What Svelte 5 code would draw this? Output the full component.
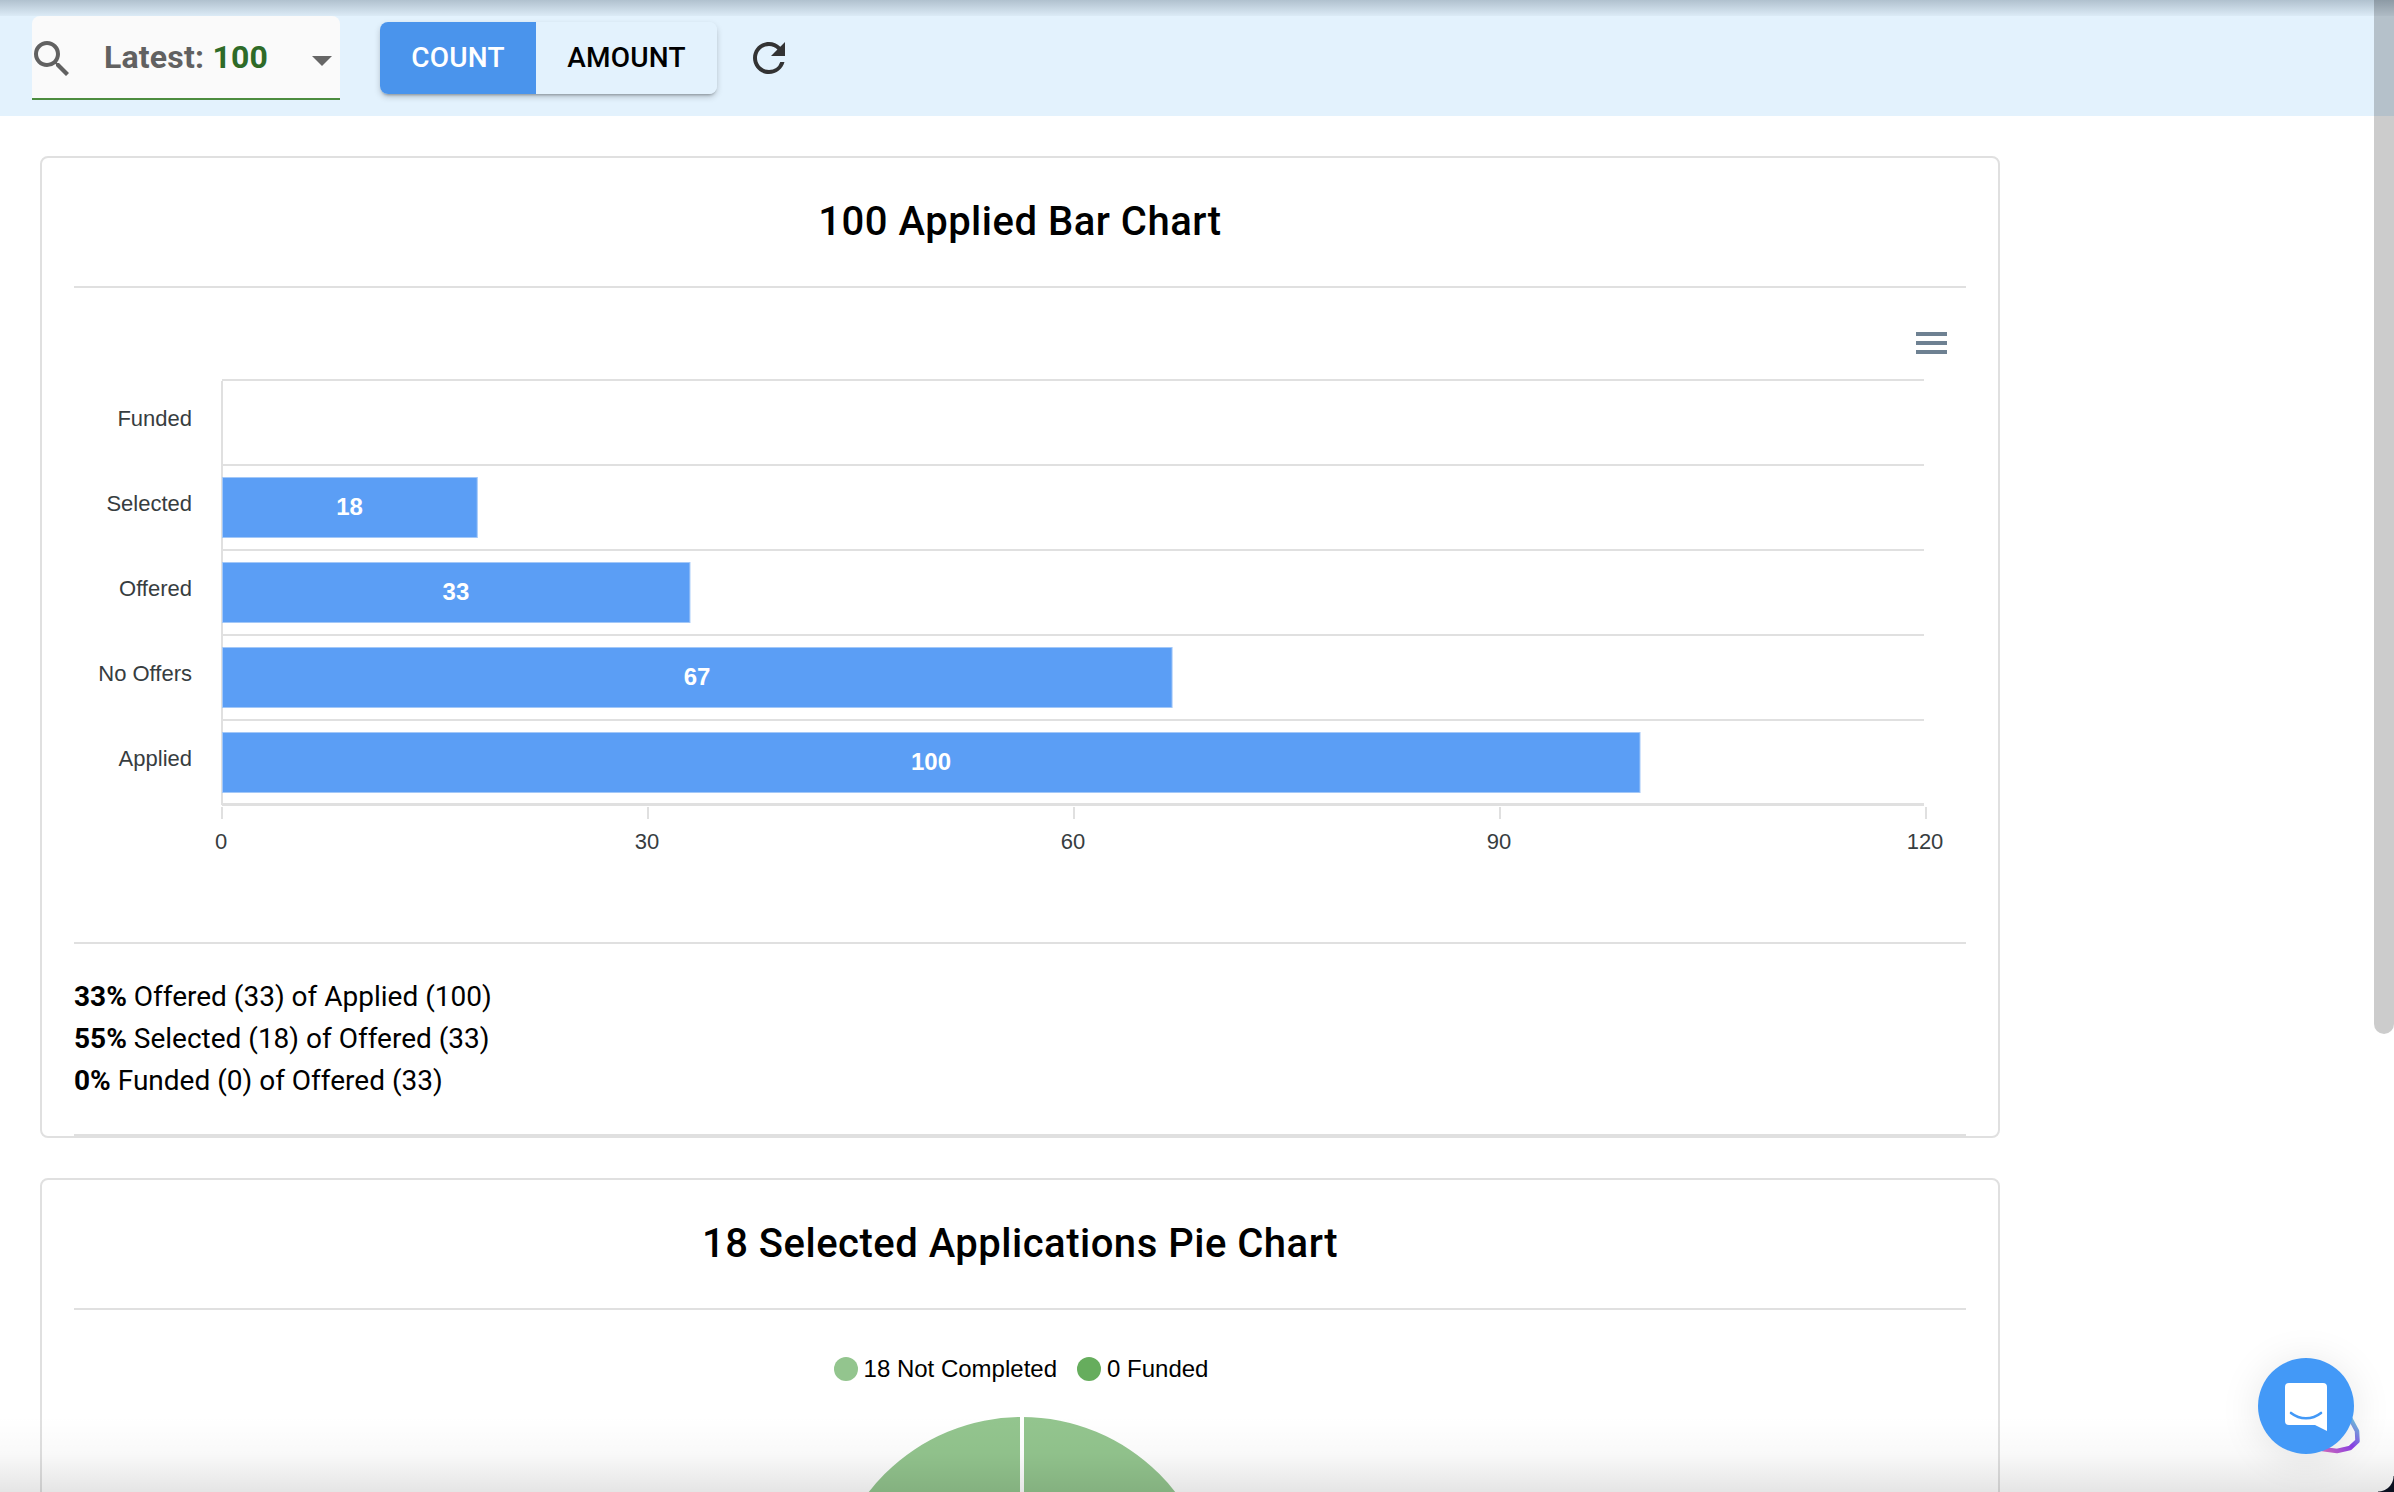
<script lang="ts">
  const rows = [
    { label: 'Funded', value: 0, labelY: 418 },
    { label: 'Selected', value: 18, labelY: 503 },
    { label: 'Offered', value: 33, labelY: 588 },
    { label: 'No Offers', value: 67, labelY: 673 },
    { label: 'Applied', value: 100, labelY: 758 }
  ];
  const gridLines = [380, 465, 550, 635, 720];
  const ticks = [0, 30, 60, 90, 120];
  const plotLeft = 222;
  const unit = 14.2;
  const barUnit = 14.18;

  let metric = $state('count');
</script>

<div class="page">
  <header class="toolbar">
    <div class="latest">
      <svg class="search" viewBox="0 0 24 24" aria-hidden="true">
        <path d="M9.5 3A6.5 6.5 0 0 1 16 9.5c0 1.61-.59 3.09-1.56 4.23l.27.27h.79l5 5-1.5 1.5-5-5v-.79l-.27-.27A6.516 6.516 0 0 1 9.5 16 6.5 6.5 0 0 1 3 9.5 6.5 6.5 0 0 1 9.5 3m0 2C7 5 5 7 5 9.5S7 14 9.5 14 14 12 14 9.5 12 5 9.5 5z" />
      </svg>
      <span class="latest-text">Latest: <b>100</b></span>
      <span class="caret"></span>
    </div>
    <div class="toggle">
      <button class:active={metric === 'count'} onclick={() => (metric = 'count')}>COUNT</button>
      <button class:active={metric === 'amount'} onclick={() => (metric = 'amount')}>AMOUNT</button>
    </div>
    <svg class="refresh" viewBox="0 0 24 24" aria-hidden="true">
      <path d="M17.65 6.35A7.958 7.958 0 0 0 12 4c-4.42 0-7.99 3.58-7.99 8s3.57 8 7.99 8c3.73 0 6.84-2.55 7.73-6h-2.08A5.99 5.99 0 0 1 12 18c-3.31 0-6-2.69-6-6s2.69-6 6-6c1.66 0 3.14.69 4.22 1.78L13 11h7V4l-2.35 2.35z" />
    </svg>
  </header>

  <main class="content">
    <section class="card first">
      <h2>100 Applied Bar Chart</h2>
      <hr />
      <svg class="bar-chart" viewBox="74 288 1892 654" width="1892" height="654">
        <g class="menu-icon">
          <rect x="1916" y="332" width="31" height="4" />
          <rect x="1916" y="341" width="31" height="4" />
          <rect x="1916" y="350" width="31" height="4" />
        </g>
        {#each gridLines as y}
          <rect class="grid" x="222" y={y - 1} width="1702" height="2" />
        {/each}
        <rect class="grid" x="221" y="381" width="2" height="424" />
        <rect class="grid" x="222" y="803" width="1702" height="3" />
        {#each ticks as t}
          <rect class="grid" x={plotLeft + t * unit - 1} y="807" width="2" height="12" />
          <text class="tick" x={plotLeft + t * unit - 1} y="849" text-anchor="middle">{t}</text>
        {/each}
        {#each rows as row, i}
          <text class="tick" x="192" y={row.labelY + 8} text-anchor="end">{row.label}</text>
          {#if row.value > 0}
            <rect class="bar" x="222.5" y={392.5 + i * 85} width={row.value * barUnit - 0.5} height="60" />
            <text class="value" x={plotLeft + (row.value * barUnit) / 2} y={515 + (i - 1) * 85} text-anchor="middle">{row.value}</text>
          {/if}
        {/each}
      </svg>
      <hr />
      <div class="summary">
        <p><b>33%</b> Offered (33) of Applied (100)</p>
        <p><b>55%</b> Selected (18) of Offered (33)</p>
        <p><b>0%</b> Funded (0) of Offered (33)</p>
      </div>
      <hr class="closing" />
    </section>

    <section class="card">
      <h2>18 Selected Applications Pie Chart</h2>
      <hr />
      <div class="legend">
        <span class="item"><i class="dot light"></i>18 Not Completed</span>
        <span class="item"><i class="dot dark"></i>0 Funded</span>
      </div>
      <div class="pie-wrap">
        <svg class="pie" viewBox="0 0 388 388" width="388" height="388">
          <circle cx="194" cy="194" r="194" fill="#93c58e" />
          <rect x="192" y="0" width="4" height="194" fill="#fff" />
        </svg>
      </div>
    </section>
  </main>

  <div class="bottom-fade"></div>
  <div class="top-shade"></div>
  <div class="scroll-thumb"></div>

  <svg class="ring" viewBox="0 0 60 60" width="60" height="60" aria-hidden="true">
    <defs>
      <linearGradient id="ringStroke" x1="1" y1="0" x2="0" y2="1">
        <stop offset="0" stop-color="#6fd6e0" />
        <stop offset="0.5" stop-color="#8a3fe6" />
        <stop offset="1" stop-color="#d66cc4" />
      </linearGradient>
    </defs>
    <path d="M28 46 L37 38" stroke="#10131c" stroke-width="4" fill="none" />
    <path d="M46 22 L53 35 L53.5 45 L46 52 L33 55 L18 53" stroke="url(#ringStroke)" stroke-width="4.5" fill="none" stroke-linejoin="round" />
  </svg>

  <button class="chat" aria-label="Open chat">
    <svg viewBox="0 0 42 48" width="42" height="48" aria-hidden="true">
      <path class="bubble" d="M4 0H38a4 4 0 0 1 4 4V48L30 42H4a4 4 0 0 1-4-4V4a4 4 0 0 1 4-4z" />
      <path class="smile" d="M6 30c9 7 21 7 30 0" />
    </svg>
  </button>

  <div class="window-corner"></div>
</div>

<style>
  :global(body) {
    margin: 0;
    background: #fff;
    overflow: hidden;
  }

  .page {
    position: relative;
    width: 2394px;
    height: 1492px;
    overflow: hidden;
    font-family: Roboto, 'Liberation Sans', sans-serif;
    color: #000;
  }

  .toolbar {
    height: 116px;
    box-sizing: border-box;
    background: #e3f2fd;
    display: flex;
    align-items: flex-start;
    padding: 16px 0 0 32px;
  }

  .latest {
    width: 308px;
    height: 84px;
    box-sizing: border-box;
    background: #fafafa;
    border-bottom: 2px solid #4c8c3f;
    border-radius: 8px 8px 0 0;
    display: flex;
    align-items: center;
  }

  .search {
    width: 48px;
    height: 48px;
    margin-left: -4px;
    margin-top: 4px;
    fill: #616161;
    flex: none;
  }

  .latest-text {
    margin-left: 28px;
    font-size: 32px;
    font-weight: 700;
    letter-spacing: 0.2px;
    color: #616161;
    white-space: nowrap;
    position: relative;
  }

  .latest-text b {
    font-weight: 700;
    color: #2e6b28;
  }

  .caret {
    margin-left: 44px;
    margin-top: 8px;
    border-left: 10px solid transparent;
    border-right: 10px solid transparent;
    border-top: 10px solid #666;
  }

  .toggle {
    margin: 6px 0 0 40px;
    width: 337px;
    height: 72px;
    display: flex;
    border-radius: 8px;
    overflow: hidden;
    box-shadow: 0 3px 3px -2px rgba(0, 0, 0, 0.3), 0 3px 6px rgba(0, 0, 0, 0.18);
  }

  .toggle button {
    border: none;
    padding: 0 0 2px;
    font-family: inherit;
    font-size: 28px;
    font-weight: 500;
    letter-spacing: 0.2px;
    background: #e3f2fd;
    color: #000;
    cursor: pointer;
  }

  .toggle button:first-child {
    width: 156px;
  }

  .toggle button:last-child {
    flex: 1;
  }

  .toggle button.active {
    background: #4a94ec;
    color: #fff;
  }

  .refresh {
    width: 48px;
    height: 48px;
    margin: 18px 0 0 28px;
    fill: #333;
  }

  .content {
    padding: 40px 0 0 40px;
    width: 1960px;
    display: flex;
    flex-direction: column;
    gap: 40px;
  }

  .card {
    box-sizing: border-box;
    border: 2px solid #e0e0e0;
    border-radius: 8px;
    padding: 0 32px;
    background: #fff;
    flex: none;
  }

  .card.first {
    height: 982px;
  }

  h2 {
    margin: 0;
    height: 128px;
    line-height: 128px;
    text-align: center;
    font-size: 40px;
    font-weight: 500;
    letter-spacing: 0.5px;
    color: #000;
  }

  hr {
    margin: 0;
    border: none;
    height: 2px;
    background: #e0e0e0;
  }

  hr.closing {
    height: 4px;
  }

  .bar-chart {
    display: block;
  }

  .grid {
    fill: #e0e0e0;
  }

  .menu-icon rect {
    fill: #6e8192;
  }

  .tick {
    font-family: 'Liberation Sans', Arial, sans-serif;
    font-size: 22px;
    fill: #373d3f;
  }

  .value {
    font-family: 'Liberation Sans', Arial, sans-serif;
    font-size: 24px;
    font-weight: 700;
    fill: #fff;
  }

  .bar {
    fill: #5b9ef5;
    stroke: #a3c8f8;
    stroke-width: 1;
  }

  .summary {
    height: 190px;
    box-sizing: border-box;
    padding-top: 32px;
    font-size: 28px;
    line-height: 42px;
  }

  .summary p {
    margin: 0;
  }

  .summary b {
    font-weight: 700;
  }

  .legend {
    display: flex;
    justify-content: center;
    gap: 20px;
    padding: 47px 0 0 2px;
    font-family: 'Liberation Sans', Arial, sans-serif;
    font-size: 24px;
    line-height: 24px;
  }

  .item {
    display: flex;
    align-items: center;
    gap: 6px;
  }

  .dot {
    width: 24px;
    height: 24px;
    border-radius: 50%;
  }

  .dot.light {
    background: #93c58e;
  }

  .dot.dark {
    background: #66ad5d;
  }

  .pie-wrap {
    display: flex;
    justify-content: center;
    margin-top: 36px;
    padding-left: 4px;
  }

  .pie {
    flex: none;
  }

  .bottom-fade {
    position: absolute;
    left: 0;
    right: 0;
    bottom: 0;
    height: 76px;
    background: linear-gradient(to bottom, rgba(0, 0, 0, 0), rgba(0, 0, 0, 0.025) 50%, rgba(0, 0, 0, 0.1));
    pointer-events: none;
  }

  .top-shade {
    position: absolute;
    left: 0;
    right: 0;
    top: 0;
    height: 16px;
    background: linear-gradient(to bottom, rgba(40, 60, 80, 0.27), rgba(40, 60, 80, 0.04));
    pointer-events: none;
  }

  .scroll-thumb {
    position: absolute;
    top: 0;
    right: 0;
    width: 20px;
    height: 1034px;
    background: rgba(0, 0, 0, 0.2);
    border-radius: 0 0 10px 10px;
  }

  .ring {
    position: absolute;
    left: 2304px;
    top: 1396px;
  }

  .chat {
    position: absolute;
    left: 2258px;
    top: 1358px;
    width: 96px;
    height: 96px;
    border: none;
    padding: 0;
    border-radius: 50%;
    background: #4399f7;
    box-shadow: 0 4px 40px rgba(0, 0, 0, 0.1);
    display: flex;
    align-items: center;
    justify-content: center;
    cursor: pointer;
  }

  .chat svg {
    margin-top: 2px;
  }

  .bubble {
    fill: #fff;
  }

  .smile {
    fill: none;
    stroke: #4399f7;
    stroke-width: 2.6;
    stroke-linecap: round;
  }

  .window-corner {
    position: absolute;
    right: 0;
    bottom: 0;
    width: 16px;
    height: 16px;
    background: radial-gradient(circle at 0 0, transparent 15px, #0b1020 16px);
  }
</style>
